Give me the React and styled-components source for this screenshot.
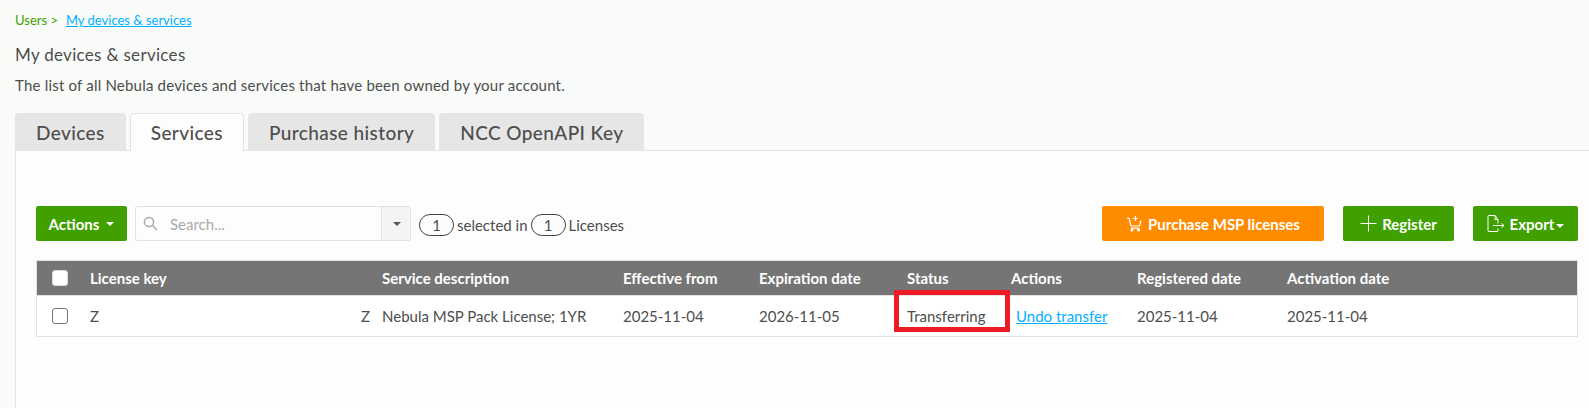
import styled, { createGlobalStyle } from 'styled-components';

const FONT = "Lato, 'Liberation Sans', sans-serif";

const GlobalStyle = createGlobalStyle`
  html, body {
    margin: 0;
    height: 100%;
    overflow: hidden;
    background: #f9fbf9;
    font-family: ${FONT};
    color: #4d4d4d;
  }
`;

const columns = [
  { title: 'License key', width: 292 },
  { title: 'Service description', width: 241 },
  { title: 'Effective from', width: 136 },
  { title: 'Expiration date', width: 148 },
  { title: 'Status', width: 104 },
  { title: 'Actions', width: 126 },
  { title: 'Registered date', width: 150 },
  { title: 'Activation date', width: 0 },
];

function CartPlusIcon() {
  return (
    <svg width="17" height="17" viewBox="0 0 17 17" fill="none" stroke="#fff" strokeWidth="1.2">
      <path d="M1 3h2l2 8h8.5l1.5-5.5" />
      <path d="M9.5 1v5M7 3.5h5" />
      <path d="M5 13.2h8.5" />
      <circle cx="6" cy="15" r="1" fill="#fff" />
      <circle cx="12.5" cy="15" r="1" fill="#fff" />
    </svg>
  );
}

function PlusIcon() {
  return (
    <svg width="17" height="17" viewBox="0 0 17 17" stroke="#fff" strokeWidth="1">
      <path d="M8.5 0.5v16M0.5 8.5h16" />
    </svg>
  );
}

function ExportIcon() {
  return (
    <svg width="18" height="17" viewBox="0 0 18 17" fill="none" stroke="#fff" strokeWidth="1">
      <path d="M11 8.5V4.5L8 0.5H2a1 1 0 0 0-1 1v14a1 1 0 0 0 1 1h8a1 1 0 0 0 1-1v-2" />
      <path d="M8 0.5v4h3" />
      <path d="M6 10.5h11M14.5 8.5l2.5 2-2.5 2" />
    </svg>
  );
}

function SearchIcon() {
  return (
    <svg width="15" height="15" viewBox="0 0 15 15" fill="none" stroke="#aaa" strokeWidth="1.5">
      <circle cx="6" cy="6" r="4.6" />
      <path d="M9.5 9.5l4.5 4.5" />
    </svg>
  );
}

export default function App() {
  return (
    <Page>
      <GlobalStyle />
      <Breadcrumb>
        <span>Users &gt;</span>
        <CrumbLink href="#">My devices &amp; services</CrumbLink>
      </Breadcrumb>
      <Title>My devices &amp; services</Title>
      <Description>The list of all Nebula devices and services that have been owned by your account.</Description>

      <Tabs>
        <Tab>Devices</Tab>
        <Tab $active>Services</Tab>
        <Tab>Purchase history</Tab>
        <Tab>NCC OpenAPI Key</Tab>
      </Tabs>

      <Panel>
        <Toolbar>
          <ToolGroup>
            <Button $width={91}>
              Actions<Caret />
            </Button>
            <SearchBox>
              <SearchField>
                <SearchIcon />
                <span>Search...</span>
              </SearchField>
              <SearchToggle>
                <Caret $dark />
              </SearchToggle>
            </SearchBox>
            <Counts>
              <CountPill>1</CountPill>
              <span>selected in</span>
              <CountPill>1</CountPill>
              <span>Licenses</span>
            </Counts>
          </ToolGroup>
          <ToolActions>
            <Button $width={222} $color="#ff8b00">
              <CartPlusIcon />
              Purchase MSP licenses
            </Button>
            <Button $width={111}>
              <PlusIcon />
              Register
            </Button>
            <Button $width={105}>
              <ExportIcon />
              <span>
                Export<Caret />
              </span>
            </Button>
          </ToolActions>
        </Toolbar>

        <Table>
          <HeaderRow>
            <CheckCell>
              <Check $header />
            </CheckCell>
            {columns.map((col) => (
              <HeaderCell key={col.title} $width={col.width}>
                {col.title}
              </HeaderCell>
            ))}
          </HeaderRow>
          <BodyRow>
            <CheckCell>
              <Check />
            </CheckCell>
            <KeyCell $width={292}>
              <span>Z</span>
              <span>Z</span>
            </KeyCell>
            <Cell $width={241}>Nebula MSP Pack License; 1YR</Cell>
            <Cell $width={136}>2025-11-04</Cell>
            <Cell $width={148}>2026-11-05</Cell>
            <Cell $width={104}>
              Transferring
              <Highlight />
            </Cell>
            <Cell $width={126}>
              <UndoLink href="#">Undo transfer</UndoLink>
            </Cell>
            <Cell $width={150}>2025-11-04</Cell>
            <Cell $width={0}>2025-11-04</Cell>
          </BodyRow>
        </Table>
      </Panel>
    </Page>
  );
}

const Page = styled.div`
  height: 408px;
  padding: 12px 0 0 15px;
  box-sizing: border-box;
  overflow: hidden;
`;

const Breadcrumb = styled.div`
  display: flex;
  gap: 8px;
  height: 17px;
  font-size: 13px;
  line-height: 17px;
  color: #3fa000;
`;

const CrumbLink = styled.a`
  color: #00b0ff;
`;

const Title = styled.h1`
  margin: 15px 0 0;
  font-size: 17px;
  font-weight: 400;
  line-height: 22px;
  letter-spacing: 0.3px;
`;

const Description = styled.p`
  margin: 9px 0 0;
  font-size: 15px;
  line-height: 20px;
  letter-spacing: 0.2px;
`;

const Tabs = styled.div`
  display: flex;
  gap: 4px;
  margin-top: 18px;
  position: relative;
  z-index: 1;
`;

const Tab = styled.div`
  height: 38px;
  padding: 0 20px;
  box-sizing: border-box;
  display: flex;
  align-items: center;
  font-size: 19px;
  font-weight: 500;
  letter-spacing: 0.4px;
  border-radius: 4px 4px 0 0;
  background: ${(p) => (p.$active ? '#fdfdfd' : '#e6e6e6')};
  border: 1px solid ${(p) => (p.$active ? '#e2e2e2' : '#e6e6e6')};
  border-bottom: 0;
`;

const Panel = styled.div`
  height: 300px;
  margin-top: -1px;
  margin-right: -10px;
  padding: 55px 20px 0 20px;
  box-sizing: border-box;
  background: #fdfdfd;
  border: 1px solid #e2e2e2;
`;

const Toolbar = styled.div`
  display: flex;
  justify-content: space-between;
  height: 35px;
`;

const ToolGroup = styled.div`
  display: flex;
  align-items: center;
  gap: 8px;
`;

const ToolActions = styled.div`
  display: flex;
  gap: 19px;
`;

const Button = styled.button`
  width: ${(p) => p.$width}px;
  height: 35px;
  display: flex;
  align-items: center;
  justify-content: center;
  gap: 5px;
  padding: 0;
  border: 0;
  border-radius: 2px;
  background: ${(p) => p.$color || '#3fa000'};
  color: #fff;
  font-family: ${FONT};
  font-size: 15px;
  font-weight: 700;
`;

const Caret = styled.i`
  display: inline-block;
  margin-left: 2px;
  vertical-align: middle;
  border-left: 4px solid transparent;
  border-right: 4px solid transparent;
  border-top: 4px solid ${(p) => (p.$dark ? '#555' : '#fff')};
`;

const SearchBox = styled.div`
  width: 276px;
  height: 35px;
  display: flex;
  box-sizing: border-box;
  border: 1px solid #e2e2e2;
  border-radius: 2px;
`;

const SearchField = styled.div`
  flex: 1;
  display: flex;
  align-items: center;
  gap: 12px;
  padding-left: 7px;
  font-size: 15px;
  color: #aaa;
`;

const SearchToggle = styled.div`
  width: 28px;
  display: flex;
  align-items: center;
  justify-content: center;
  background: #f4f4f4;
  border-left: 1px solid #e2e2e2;
`;

const Counts = styled.div`
  display: flex;
  align-items: center;
  gap: 3px;
  font-size: 15px;
  margin-left: 0;
  padding-top: 3px;
`;

const CountPill = styled.span`
  width: 35px;
  height: 22px;
  box-sizing: border-box;
  display: flex;
  align-items: center;
  justify-content: center;
  border: 1px solid #444;
  border-radius: 11px;
`;

const Table = styled.div`
  margin-top: 19px;
  border: 1px solid #e2e2e2;
`;

const HeaderRow = styled.div`
  display: flex;
  align-items: center;
  height: 34px;
  background: #757575;
  color: #fff;
  font-size: 15px;
  font-weight: 700;
`;

const BodyRow = styled.div`
  display: flex;
  align-items: center;
  height: 40px;
  background: #fff;
  font-size: 15px;
  border-top: 1px solid #e2e2e2;
`;

const CheckCell = styled.div`
  width: 53px;
  padding-left: 15px;
  box-sizing: border-box;
  flex: none;
`;

const Check = styled.div`
  width: 16px;
  height: 16px;
  box-sizing: border-box;
  border-radius: 3px;
  background: #fff;
  border: 1px solid ${(p) => (p.$header ? '#ddd' : '#777')};
`;

const HeaderCell = styled.div`
  flex: none;
  width: ${(p) => p.$width}px;
  white-space: nowrap;
`;

const Cell = styled.div`
  flex: none;
  width: ${(p) => p.$width}px;
  white-space: nowrap;
  position: relative;
`;

const KeyCell = styled(Cell)`
  display: flex;
  justify-content: space-between;
  padding-right: 12px;
  box-sizing: border-box;
`;

const Highlight = styled.div`
  position: absolute;
  left: -13px;
  top: -17px;
  width: 116px;
  height: 42px;
  box-sizing: border-box;
  border: 5px solid #ed1c24;
`;

const UndoLink = styled.a`
  margin-left: 5px;
  color: #00b0ff;
`;
